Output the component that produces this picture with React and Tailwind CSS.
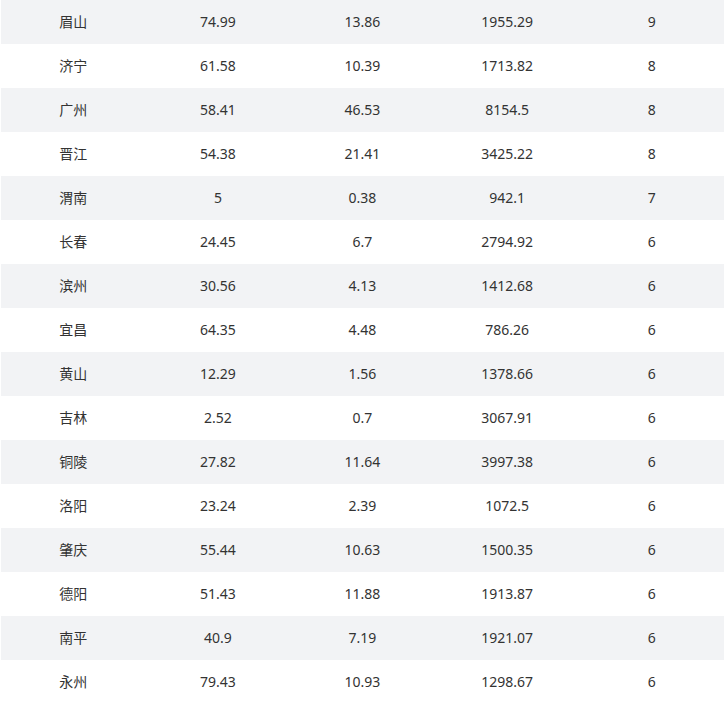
const rows = [
  ["眉山", "74.99", "13.86", "1955.29", "9"],
  ["济宁", "61.58", "10.39", "1713.82", "8"],
  ["广州", "58.41", "46.53", "8154.5", "8"],
  ["晋江", "54.38", "21.41", "3425.22", "8"],
  ["渭南", "5", "0.38", "942.1", "7"],
  ["长春", "24.45", "6.7", "2794.92", "6"],
  ["滨州", "30.56", "4.13", "1412.68", "6"],
  ["宜昌", "64.35", "4.48", "786.26", "6"],
  ["黄山", "12.29", "1.56", "1378.66", "6"],
  ["吉林", "2.52", "0.7", "3067.91", "6"],
  ["铜陵", "27.82", "11.64", "3997.38", "6"],
  ["洛阳", "23.24", "2.39", "1072.5", "6"],
  ["肇庆", "55.44", "10.63", "1500.35", "6"],
  ["德阳", "51.43", "11.88", "1913.87", "6"],
  ["南平", "40.9", "7.19", "1921.07", "6"],
  ["永州", "79.43", "10.93", "1298.67", "6"],
]

export default function App() {
  return (
    <div className="w-[727px] h-[704px] overflow-hidden bg-white pl-px font-['Segoe_UI','Noto_Sans','Noto_Sans_CJK_SC',sans-serif] text-[14px] text-[#333]">
      <table className="w-[723px] table-fixed border-collapse">
        <tbody>
          {rows.map((r, i) => (
            <tr key={r[0]} className={i % 2 === 0 ? "bg-[#f2f3f5]" : "bg-white"}>
              {r.map((c, j) => (
                <td key={j} className="h-[44px] p-0 pb-[2px] text-center align-middle">
                  {c}
                </td>
              ))}
            </tr>
          ))}
        </tbody>
      </table>
    </div>
  )
}
